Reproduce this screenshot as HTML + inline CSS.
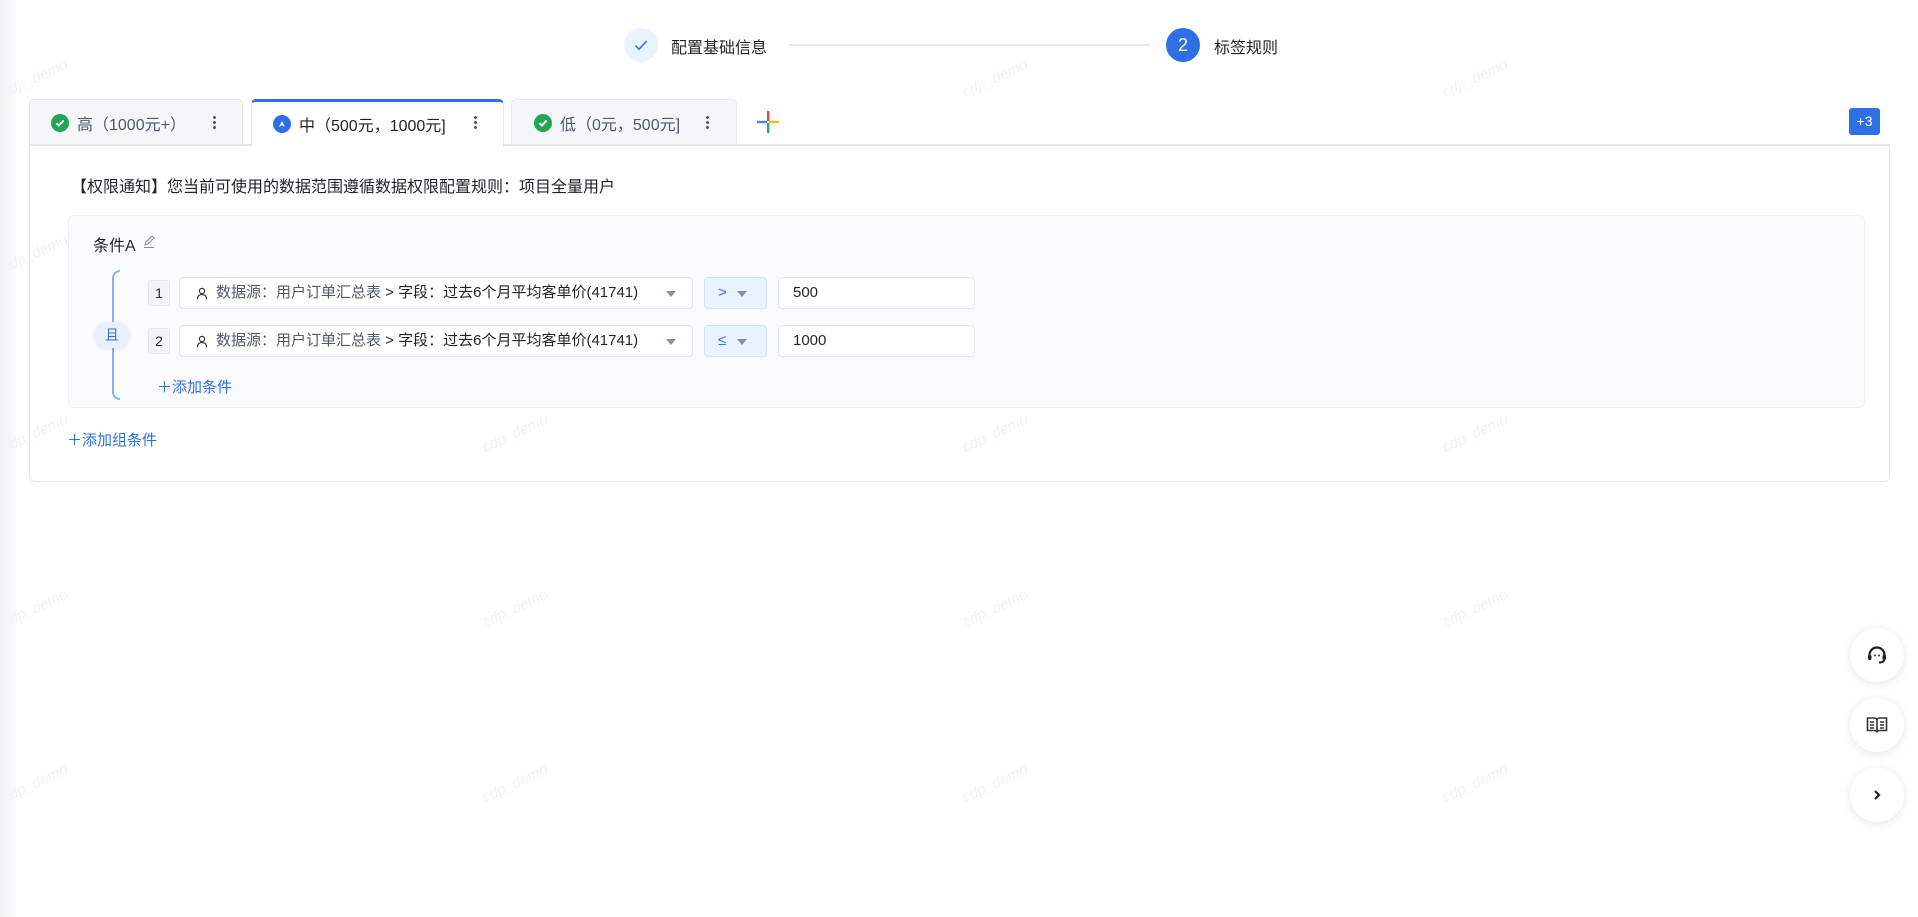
<!DOCTYPE html>
<html><head><meta charset="utf-8"><style>
*{box-sizing:border-box;margin:0;padding:0}
body{width:1918px;height:917px;background:#fff;font-family:"Liberation Sans","Noto Sans CJK SC",sans-serif;color:#1f2329;position:relative;overflow:hidden}
.abs{position:absolute}
.strip{left:0;top:0;width:16px;height:917px;background:linear-gradient(90deg,#f0f1f3,#fafafa)}
.wm{position:absolute;color:#f1f2f5;font-size:15px;transform:rotate(-25deg);font-style:italic}
.tab{position:absolute;top:99px;height:46px;background:#f5f6f8;border:1px solid #e5e6eb;border-bottom:none;border-radius:5px 5px 0 0;display:flex;align-items:center;font-size:16px;color:#4e5969}
.dots{position:absolute;width:3px;height:15px;background:radial-gradient(circle,#555 1.3px,transparent 1.6px) 0 0/3px 5px repeat-y}
.chk{width:18px;height:18px;border-radius:50%;background:#22a559;display:inline-flex;align-items:center;justify-content:center;margin-right:8px}
.row{position:absolute;left:148px;height:32px;width:830px}
.idx{position:absolute;left:0;top:3px;width:22px;height:26px;background:#f2f3f5;border:1px solid #e5e6eb;border-radius:3px;font-size:14px;text-align:center;line-height:24px}
.sel{position:absolute;left:31px;top:0;width:514px;height:32px;background:#fff;border:1px solid #e5e6eb;border-radius:4px;font-size:15px;color:#4e5969;line-height:30px;padding-left:36px}
.op{position:absolute;left:556px;top:0;width:63px;height:32px;background:#e8f3ff;border:1px solid #cfe3fb;border-radius:4px;color:#2f6fe6;font-size:15px;line-height:30px;padding-left:13px}
.inp{position:absolute;left:630px;top:0;width:197px;height:32px;background:#fff;border:1px solid #e5e6eb;border-radius:4px;font-size:15px;line-height:30px;padding-left:14px}
.tri{position:absolute;width:0;height:0;border-left:5px solid transparent;border-right:5px solid transparent;border-top:6px solid #86909c}
.fb{position:absolute;left:1850px;width:54px;height:54px;border-radius:50%;background:#fff;box-shadow:0 2px 10px rgba(0,0,0,.1);display:flex;align-items:center;justify-content:center}
</style></head><body>
<div class="abs strip"></div>
<div class="wm" style="left:0;top:70px">cdp_demo</div>
<div class="wm" style="left:960px;top:70px">cdp_demo</div>
<div class="wm" style="left:1440px;top:70px">cdp_demo</div>
<div class="wm" style="left:0;top:245px">cdp_demo</div>
<div class="wm" style="left:960px;top:245px">cdp_demo</div>
<div class="wm" style="left:1440px;top:245px">cdp_demo</div>
<div class="wm" style="left:0;top:425px">cdp_demo</div>
<div class="wm" style="left:480px;top:425px">cdp_demo</div>
<div class="wm" style="left:960px;top:425px">cdp_demo</div>
<div class="wm" style="left:1440px;top:425px">cdp_demo</div>
<div class="wm" style="left:0;top:600px">cdp_demo</div>
<div class="wm" style="left:480px;top:600px">cdp_demo</div>
<div class="wm" style="left:960px;top:600px">cdp_demo</div>
<div class="wm" style="left:1440px;top:600px">cdp_demo</div>
<div class="wm" style="left:0;top:775px">cdp_demo</div>
<div class="wm" style="left:480px;top:775px">cdp_demo</div>
<div class="wm" style="left:960px;top:775px">cdp_demo</div>
<div class="wm" style="left:1440px;top:775px">cdp_demo</div>

<!-- steps -->
<div class="abs" style="left:624px;top:28px;width:34px;height:34px;border-radius:50%;background:#e8f3ff;display:flex;align-items:center;justify-content:center"><svg width="18" height="18" viewBox="0 0 16 16"><path d="M3 8.5l3.3 3.2L13 4.5" stroke="#2f6fe6" stroke-width="1.4" fill="none"/></svg></div>
<div class="abs" style="left:671px;top:34px;font-size:16px;color:#1f2329">配置基础信息</div>
<div class="abs" style="left:789px;top:44px;width:361px;height:2px;background:#e5e6eb"></div>
<div class="abs" style="left:1166px;top:28px;width:34px;height:34px;border-radius:50%;background:#2f6fe6;color:#fff;font-size:18px;text-align:center;line-height:34px">2</div>
<div class="abs" style="left:1214px;top:34px;font-size:16px;color:#1f2329">标签规则</div>

<!-- tabs -->
<div class="tab" style="left:29px;width:214px;padding-left:21px"><span class="chk"><svg width="12" height="12" viewBox="0 0 12 12"><path d="M2.5 6.2l2.4 2.3L9.6 3.6" stroke="#fff" stroke-width="2" fill="none"/></svg></span>高（1000元+）<span class="dots" style="left:183px;top:15px"></span></div>
<div class="tab" style="left:251px;width:253px;background:#fff;padding-left:21px;color:#1f2329;border-top:3px solid #2f6fe6;height:47px;z-index:2"><span class="chk" style="background:#2f6fe6"><svg width="12" height="12" viewBox="0 0 12 12"><path d="M3 9L6 3l3 6L6 7.3z" fill="#fff"/></svg></span>中（500元，1000元]<span class="dots" style="left:222px;top:13px"></span></div>
<div class="tab" style="left:511px;width:226px;padding-left:22px"><span class="chk"><svg width="12" height="12" viewBox="0 0 12 12"><path d="M2.5 6.2l2.4 2.3L9.6 3.6" stroke="#fff" stroke-width="2" fill="none"/></svg></span>低（0元，500元]<span class="dots" style="left:194px;top:15px"></span></div>
<svg class="abs" style="left:757px;top:111px" width="22" height="22" viewBox="0 0 22 22"><rect x="10" y="0" width="2.4" height="10" fill="#ea4335"/><rect x="0" y="9.8" width="10" height="2.4" fill="#4285f4"/><rect x="12" y="9.8" width="10" height="2.4" fill="#fbbc05"/><rect x="10" y="12" width="2.4" height="10" fill="#34a853"/></svg>
<div class="abs" style="left:1849px;top:108px;width:31px;height:27px;background:#2f6fe6;border-radius:3px;color:#fff;font-size:14px;text-align:center;line-height:27px">+3</div>

<!-- content -->
<div class="abs" style="left:29px;top:144px;width:1861px;height:338px;border:1px solid #e5e6eb;border-top:2px solid #e5e6eb;border-radius:0 0 6px 6px"></div>
<div class="abs" style="left:71px;top:173px;font-size:16px;color:#1f2329">【权限通知】您当前可使用的数据范围遵循数据权限配置规则：项目全量用户</div>
<div class="abs" style="left:68px;top:215px;width:1797px;height:193px;background:#f9fbfe;border:1px solid #eef0f4;border-radius:6px"></div>
<div class="abs" style="left:93px;top:232px;font-size:16px">条件A</div>
<svg class="abs" style="left:142px;top:235px" width="14" height="14" viewBox="0 0 14 14"><path d="M3 10l1-3L10 1l2 2-6 6zM2 12.5h10" stroke="#86909c" stroke-width="1" fill="none"/></svg>
<div class="abs" style="left:112px;top:270px;width:8px;height:130px;border:2px solid #8bb1f5;border-right:none;border-radius:8px 0 0 8px"></div>
<div class="abs" style="left:94px;top:322px;width:36px;height:26px;background:#e8f0fc;border-radius:13px;color:#2f6fe6;font-size:14px;text-align:center;line-height:26px;box-shadow:0 1px 3px rgba(0,0,0,.1)">且</div>

<div class="row" style="top:277px">
<div class="idx">1</div>
<div class="sel"><svg class="abs" style="left:16px;top:9px" width="12" height="13" viewBox="0 0 12 13"><circle cx="6" cy="4" r="2.6" stroke="#333" stroke-width="1.2" fill="none"/><path d="M1.5 12c0-3 2-4.5 4.5-4.5S10.5 9 10.5 12" stroke="#333" stroke-width="1.2" fill="none"/></svg>数据源：用户订单汇总表 <span style="color:#1f2329">&gt; 字段：过去6个月平均客单价(41741)</span><span class="tri" style="left:486px;top:13px"></span></div>
<div class="op">&gt;<span class="tri" style="left:32px;top:13px"></span></div>
<div class="inp">500</div>
</div>
<div class="row" style="top:325px">
<div class="idx">2</div>
<div class="sel"><svg class="abs" style="left:16px;top:9px" width="12" height="13" viewBox="0 0 12 13"><circle cx="6" cy="4" r="2.6" stroke="#333" stroke-width="1.2" fill="none"/><path d="M1.5 12c0-3 2-4.5 4.5-4.5S10.5 9 10.5 12" stroke="#333" stroke-width="1.2" fill="none"/></svg>数据源：用户订单汇总表 <span style="color:#1f2329">&gt; 字段：过去6个月平均客单价(41741)</span><span class="tri" style="left:486px;top:13px"></span></div>
<div class="op">≤<span class="tri" style="left:32px;top:13px"></span></div>
<div class="inp">1000</div>
</div>
<div class="abs" style="left:157px;top:376px;font-size:15px;color:#2f6fe6">＋添加条件</div>
<div class="abs" style="left:67px;top:429px;font-size:15px;color:#2f6fe6">＋添加组条件</div>

<!-- float buttons -->
<div class="fb" style="top:628px"><svg width="24" height="24" viewBox="0 0 24 24"><path d="M4.5 14v-2a7.5 7.5 0 0115 0v2" stroke="#1f2329" stroke-width="2.2" fill="none"/><rect x="3" y="12" width="3.5" height="5" rx="1.5" fill="#1f2329"/><rect x="17.5" y="12" width="3.5" height="5" rx="1.5" fill="#1f2329"/><path d="M19 16.5c0 2-2 3-5 3" stroke="#1f2329" stroke-width="2" fill="none"/><circle cx="10" cy="12.5" r="1" fill="#1f2329"/><circle cx="14" cy="12.5" r="1" fill="#1f2329"/></svg></div>
<div class="fb" style="top:698px"><svg width="24" height="24" viewBox="0 0 24 24"><path d="M2.5 5h7c1.5 0 2.5 1 2.5 2.5v12c0-1-1-2-2.5-2h-7zM21.5 5h-7C13 5 12 6 12 7.5v12c0-1 1-2 2.5-2h7z" stroke="#333" stroke-width="1.6" fill="none"/><path d="M5 9h4M5 12h4M5 15h4M15 9h4M15 12h4M15 15h4" stroke="#333" stroke-width="1.4"/></svg></div>
<div class="fb" style="top:768px"><svg width="16" height="16" viewBox="0 0 16 16"><path d="M6 4l4 4-4 4" stroke="#1f2329" stroke-width="2.2" fill="none"/></svg></div>
</body></html>
